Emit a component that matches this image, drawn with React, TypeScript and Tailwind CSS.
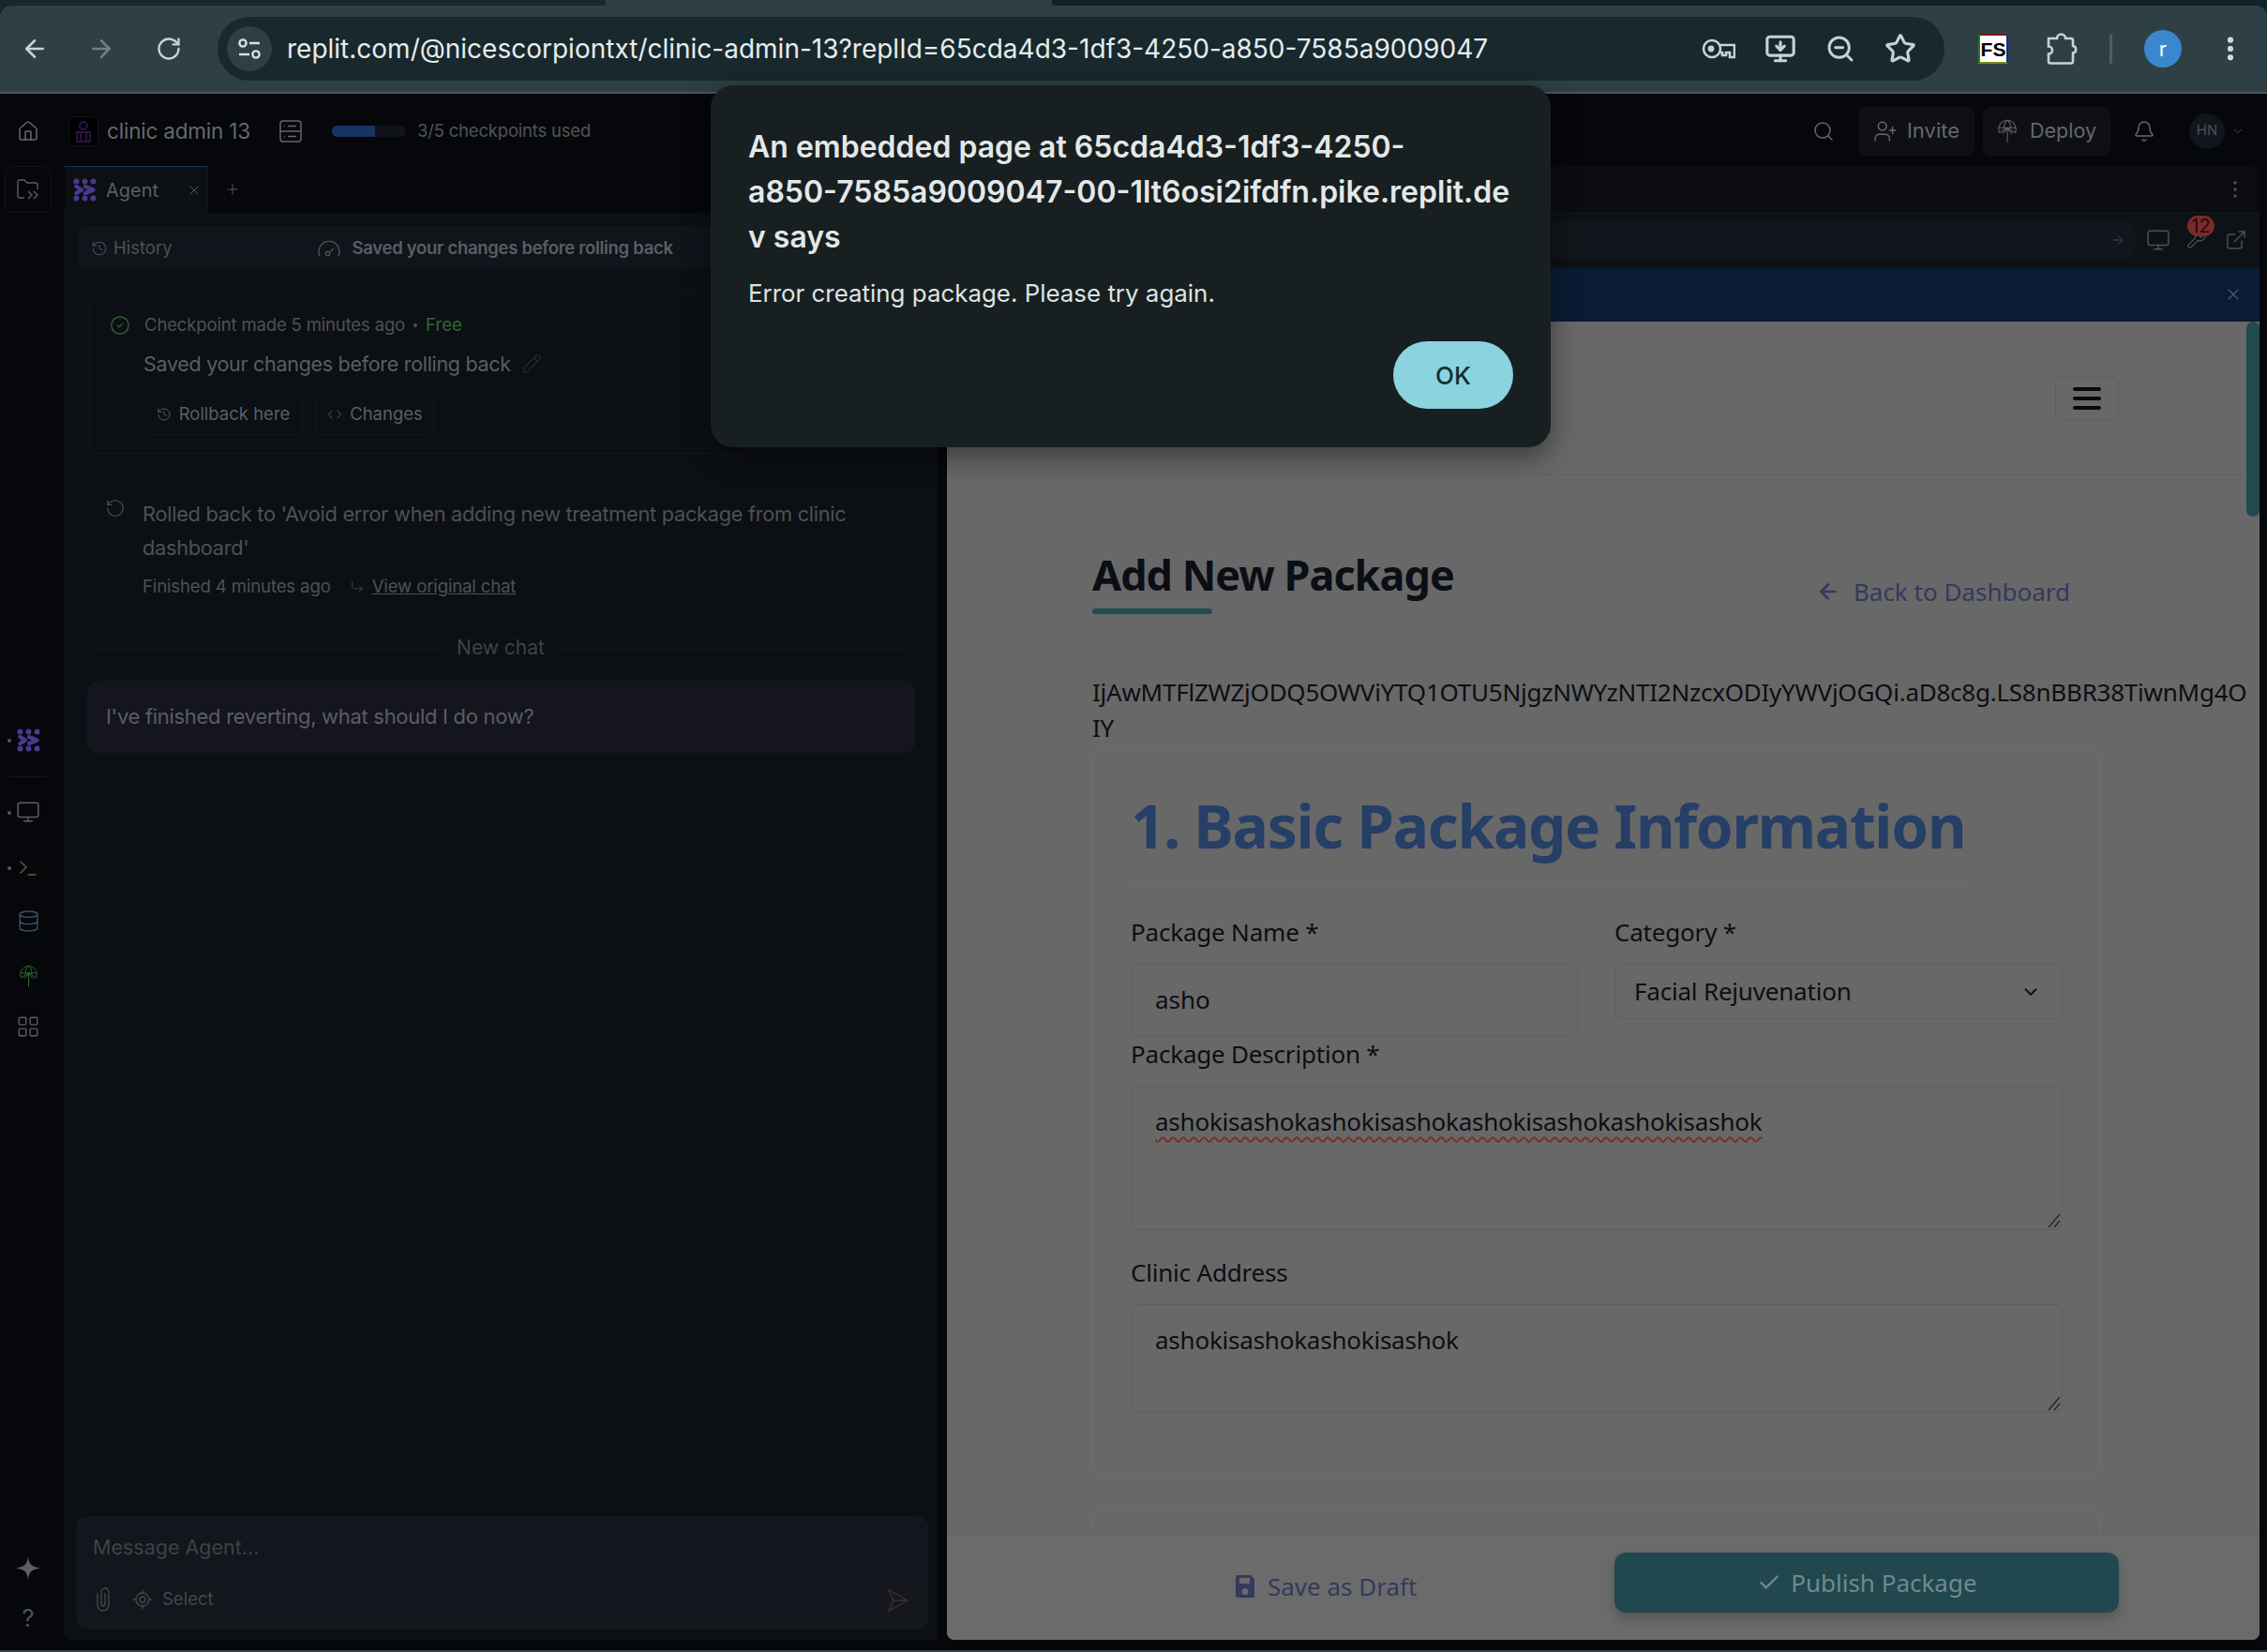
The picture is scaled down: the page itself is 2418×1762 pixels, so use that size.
import React from "react";
import {
  ArrowLeft, ArrowRight, RotateCw, MonitorDown, ZoomOut, Star, EllipsisVertical,
  Home, Search, UserPlus, Bell, ChevronDown, X, Plus, History, CircleCheck,
  Pencil, Code, RotateCcw, CornerDownRight, Monitor, Database, LayoutGrid, LocateFixed,
  ExternalLink, Wrench, Check, Terminal,
} from "lucide-react";

const ui = "font-['Inter','Roboto',sans-serif]";
const page = "font-['Noto_Sans','Open_Sans',sans-serif]";

function AgentLogo({ size = 25 }: { size?: number }) {
  const c = "#4a3a8e";
  return (
    <svg width={size} height={size} viewBox="0 0 25 25" fill={c}>
      <circle cx="3.5" cy="3.5" r="3" /><circle cx="12.5" cy="3.5" r="3" /><circle cx="21.5" cy="3.5" r="3" />
      <circle cx="3.5" cy="21.5" r="3" /><circle cx="12.5" cy="21.5" r="3" /><circle cx="21.5" cy="21.5" r="3" />
      <g fill="none" stroke={c} strokeWidth="4.4" strokeLinecap="round" strokeLinejoin="round">
        <path d="M3.5 9L9 12.5L3.5 16" /><path d="M13 9L21.5 12.5L13 16" />
      </g>
    </svg>
  );
}

function GlobeUp({ size = 24, color = "#5b5e62" }: { size?: number; color?: string }) {
  return (
    <svg width={size} height={size * 28 / 24} viewBox="0 0 24 28" fill="none" stroke={color} strokeWidth="1.1">
      <path d="M3 16a10 10 0 1 1 18 0" /><path d="M2 10h20M3 16l9 -6 9 6" />
      <path d="M12 1c-3 3-4 6-4 10M12 1c3 3 4 6 4 10" /><path d="M12 27V11M6.5 17L12 11l5.500 6" />
    </svg>
  );
}

function KeyIcon() {
  return (
    <svg width="36" height="24" viewBox="0 0 36 24" fill="none" stroke="#c6d3d6" strokeWidth="2.6" className="text-[#c6d3d6]">
      <circle cx="11" cy="12" r="9" /><circle cx="10" cy="12" r="3.4" fill="#c6d3d6" stroke="none" />
      <path d="M20 8h15v13h-5v-5h-4v3h-4v-3h-2" />
    </svg>
  );
}

function PuzzleIcon() {
  return (
    <svg width="34" height="36" viewBox="0 0 34 36" fill="none" stroke="#c6d3d6" strokeWidth="2.6">
      <path d="M3 7h9a4.500 4.500 0 0 1 9 0h6a2 2 0 0 1 2 2v6a3.800 3.800 0 0 1 0 7.500v9a2 2 0 0 1-2 2H5a2 2 0 0 1-2-2v-8a4 4 0 0 0 0-8z" />
    </svg>
  );
}

function ServerIcon() {
  return (
    <svg width="24" height="24" viewBox="0 0 24 24" fill="none" stroke="#65686c" strokeWidth="1.5">
      <rect x="1" y="1" width="22" height="22" rx="3" /><path d="M1 12h22M9 6.500h9M9 17.500h9" />
      <path d="M5 6.500h1M5 17.500h1" />
    </svg>
  );
}

function FolderIcon() {
  return (
    <svg width="24" height="22" viewBox="0 0 24 22" fill="none" stroke="#5b5e62" strokeWidth="1.4">
      <path d="M8 20H3a2 2 0 0 1-2-2V3a2 2 0 0 1 2-2h5l3 3h9a2 2 0 0 1 2 2v5" />
      <path d="M12 13l4 4-4 4M18 13l4 4-4 4" />
    </svg>
  );
}

function GaugeIcon() {
  return (
    <svg width="24" height="22" viewBox="0 0 24 22" fill="none" stroke="#4e5155" strokeWidth="1.4">
      <path d="M2 19a11 11 0 1 1 20 0" /><circle cx="10.500" cy="16.500" r="2.200" /><path d="M12.500 15l4.500-4" />
    </svg>
  );
}

function Clip() {
  return (
    <svg width="22" height="26" viewBox="0 0 22 26" fill="none" stroke="#45484c" strokeWidth="1.3">
      <path d="M5 6v13a6 6 0 0 0 12 0V5a4 4 0 0 0-8 0v13a2 2 0 0 0 4 0V6" />
    </svg>
  );
}

function Plane() {
  return (
    <svg width="24" height="26" viewBox="0 0 24 26" fill="none" stroke="#33363a" strokeWidth="1.3">
      <path d="M2 2l20 11L2 24l5-11zM7 13h15" />
    </svg>
  );
}

function Spark() {
  return (
    <svg width="26" height="25" viewBox="0 0 26 25" fill="#5b5e62">
      <path d="M13 0C14 8 16 11 26 12.500C16 14 14 17 13 25C12 17 10 14 0 12.500C10 11 12 8 13 0Z" />
    </svg>
  );
}

function Floppy() {
  return (
    <svg width="22" height="26" viewBox="0 0 22 26" fill="#333a5c">
      <path fillRule="evenodd" d="M3 1h14l4 4v18a2 2 0 0 1-2 2H3a2 2 0 0 1-2-2V3a2 2 0 0 1 2-2zm2 3v6h11V4zm6 11a3.500 3.500 0 1 0 0 7 3.500 3.500 0 0 0 0-7z" />
    </svg>
  );
}

function Chrome() {
  return (
    <div className="h-[100px] shrink-0 flex flex-col bg-[#15262b]">
      <div className="h-[6px] flex">
        <div className="w-[646px] bg-[#16282d]" />
        <div className="w-[476px] bg-[#2e4045]" />
        <div className="flex-1 bg-[#122327]" />
      </div>
      <div className={`flex-1 bg-[#2e4045] rounded-t-[12px] border-b-2 border-[#4a5759] flex items-center ${ui}`}>
        <div className="w-[72px] flex justify-center"><ArrowLeft size={30} className="text-[#c6d3d6] ml-[2px]" strokeWidth={2} /></div>
        <div className="w-[72px] flex justify-center"><ArrowRight size={30} className="text-[#6f8084]" strokeWidth={2} /></div>
        <div className="w-[72px] flex justify-center"><RotateCw size={28} className="text-[#c6d3d6]" strokeWidth={2} /></div>
        <div className="ml-[16px] w-[1842px] h-[68px] rounded-full bg-[#18282d] flex items-center pl-[10px] pr-[30px]">
          <div className="w-[48px] h-[48px] rounded-full bg-[#2e4045] flex items-center justify-center">
            <svg width="26" height="24" viewBox="0 0 26 24" fill="none" stroke="#d5e0e2" strokeWidth="2.4">
              <circle cx="6" cy="6" r="3.6" /><path d="M13 6h11M2 18h11" /><circle cx="20" cy="18" r="3.600" />
            </svg>
          </div>
          <div className="ml-[16px] flex-1 text-[28px] text-[#e6eced] whitespace-nowrap">replit.com/@nicescorpiontxt/clinic-admin-13?replId=65cda4d3-1df3-4250-a850-7585a9009047</div>
          <div className="flex items-center gap-[31px] text-[#c6d3d6]">
            <KeyIcon />
            <MonitorDown size={34} strokeWidth={2.2} />
            <ZoomOut size={32} strokeWidth={2.2} />
            <Star size={34} strokeWidth={2.2} />
          </div>
        </div>
        <div className="ml-[36px] w-[32px] h-[32px] bg-white border-2 border-t-[#7a1a1a] border-r-[#1a2a8a] border-b-[#7a8a18] border-l-[#2a7a2a] flex items-center justify-center">
          <span className="text-[21px] leading-none font-bold text-black font-['Liberation_Sans',sans-serif]">FS</span>
        </div>
        <div className="ml-[40px] h-[36px]"><PuzzleIcon /></div>
        <div className="ml-[34px] w-[3px] h-[32px] bg-[#4e6064] rounded" />
        <div className="ml-[34px] w-[40px] h-[40px] rounded-full bg-[#3b87cf] text-white text-[22px] flex items-center justify-center">r</div>
        <EllipsisVertical size={32} strokeWidth={2.6} className="ml-[36px] text-[#d5e0e2]" />
      </div>
    </div>
  );
}

function TopBar() {
  return (
    <div className={`h-[77px] shrink-0 flex items-center pt-[2px] pl-[18px] pr-[24px] text-[#65686c] ${ui}`}>
      <Home size={24} strokeWidth={1.5} />
      <div className="ml-[31px] w-[32px] h-[32px] rounded-[6px] bg-[#000000] border border-[#101216] flex items-center justify-center">
        <svg width="16" height="24" viewBox="0 0 16 24" fill="none" stroke="#3a1a5e" strokeWidth="1.4">
          <circle cx="8" cy="6" r="4" /><path d="M1 13h14v10H1zM5 13v10M11 13v10" />
        </svg>
      </div>
      <span className="ml-[9px] w-[152px] text-[22.5px] tracking-[-0.2px] whitespace-nowrap">clinic admin 13</span>
      <div className="ml-[32px] h-[24px]"><ServerIcon /></div>
      <div className="ml-[32px] w-[79px] h-[12px] rounded-full bg-[#10141a] overflow-hidden">
        <div className="w-[46px] h-full bg-[#173362]" />
      </div>
      <span className="ml-[12px] text-[18.5px] text-[#515458] tracking-[-0.2px]">3/5 checkpoints used</span>
      <div className="flex-1" />
      <Search size={24} strokeWidth={1.5} className="mr-[25px]" />
      <div className="w-[124px] h-[52px] rounded-[8px] bg-[#0e1014] flex items-center justify-center gap-[10px] text-[22px]">
        <UserPlus size={26} strokeWidth={1.4} /><span>Invite</span>
      </div>
      <div className="ml-[9px] w-[136px] h-[52px] rounded-[8px] bg-[#0e1014] flex items-center justify-center gap-[13px] text-[21.5px]">
        <GlobeUp size={22} color="#65686c" /><span>Deploy</span>
      </div>
      <Bell size={24} strokeWidth={1.5} className="ml-[24px]" />
      <div className="ml-[36px] w-[38px] h-[38px] rounded-full bg-[#11151c] flex items-center justify-center text-[15px] text-[#4e5155]">HN</div>
      <ChevronDown size={14} strokeWidth={1.5} className="ml-[7px] text-[#4e5155]" />
    </div>
  );
}

function SideDot() {
  return <span className="absolute left-[8px] top-1/2 -mt-[2px] w-[4px] h-[4px] rounded-full bg-[#55585c]" />;
}

function Sidebar() {
  return (
    <div className="w-[68px] shrink-0 flex flex-col items-center pr-[8px] text-[#5b5e62]">
      <div className="w-[50px] h-[50px] rounded-[8px] border border-[#11141a] flex items-center justify-center">
        <FolderIcon />
      </div>
      <div className="relative mt-[550px] w-full h-[25px] flex justify-center"><SideDot /><AgentLogo /></div>
      <div className="mt-[26px] w-[40px] h-px bg-[#14171d]" />
      <div className="relative mt-[24px] w-full h-[28px] flex justify-center"><SideDot /><Monitor size={26} strokeWidth={1.4} /></div>
      <div className="relative mt-[31px] w-full h-[28px] flex justify-center items-center"><SideDot /><Terminal size={24} strokeWidth={1.4} className="text-[#6b5d2c]" /></div>
      <div className="mt-[30px] h-[26px] flex justify-center"><Database size={25} strokeWidth={1.4} className="text-[#3c4f5f]" /></div>
      <div className="mt-[33px] h-[26px] flex justify-center"><GlobeUp size={21} color="#2f6b32" /></div>
      <div className="mt-[27px] h-[24px] flex justify-center"><LayoutGrid size={26} strokeWidth={1.3} /></div>
      <div className="flex-1" />
      <Spark />
      <div className={`mt-[27px] mb-[20px] text-[26px] leading-[28px] text-[#4e5155] ${ui}`}>?</div>
    </div>
  );
}

function SmallBtn({ icon, label, w }: { icon: React.ReactNode; label: string; w: string }) {
  return (
    <div className={`${w} h-[44px] rounded-[5px] border border-[#14171d] flex items-center justify-center gap-[8px] text-[18.5px] text-[#5b5e62]`}>
      {icon}<span>{label}</span>
    </div>
  );
}

function LeftPanel() {
  return (
    <div className={`w-[932px] shrink-0 flex flex-col mb-[11px] ${ui}`}>
      <div className="h-[50px] flex items-center text-[#5b5e62]">
        <div className="ml-[1px] w-[153px] h-[50px] bg-[#0c0f14] border-t border-[#173362] border-r border-r-[#13161c] flex items-center pl-[9px]">
          <AgentLogo />
          <span className="ml-[10px] text-[20px]">Agent</span>
          <X size={16} strokeWidth={1.4} className="ml-[30px]" />
        </div>
        <Plus size={18} strokeWidth={1.2} className="ml-[17px]" />
      </div>
      <div className="flex-1 bg-[#0c0f14] rounded-b-[6px] flex flex-col relative">
        <div className="mt-[14px] ml-[15px] mr-[10px] h-[46px] pt-[1px] rounded-[8px] bg-[#10141b] flex items-center pl-[14px] text-[#4e5155]">
          <History size={18} strokeWidth={1.4} />
          <span className="ml-[6px] text-[18.5px]">History</span>
          <div className="ml-[155px] h-[22px]"><GaugeIcon /></div>
          <span className="ml-[13px] text-[18.5px] font-semibold text-[#5b5e62] tracking-[-0.3px]">Saved your changes before rolling back</span>
        </div>
        <div className="mt-[26px] ml-[27px] mr-[25px] h-[171px] rounded-[8px] border border-[#14171d] flex flex-col pl-[21px] pt-[22px]">
          <div className="flex items-center h-[22px]">
            <CircleCheck size={22} strokeWidth={1.3} className="text-[#2f6b32]" />
            <span className="ml-[15px] text-[18.6px] text-[#4e5155] tracking-[-0.2px]">Checkpoint made 5 minutes ago</span>
            <span className="ml-[9px] w-[4px] h-[4px] rounded-full bg-[#4e5155]" />
            <span className="ml-[9px] text-[18.6px] text-[#2f6b32]">Free</span>
          </div>
          <div className="mt-[16px] ml-[36px] flex items-center h-[28px]">
            <span className="text-[21.5px] text-[#5b5e62] tracking-[-0.3px]">Saved your changes before rolling back</span>
            <Pencil size={22} strokeWidth={1.1} className="ml-[11px] text-[#2c2f33]" />
          </div>
          <div className="mt-[18px] ml-[36px] flex gap-[14px]">
            <SmallBtn w="w-[170px]" icon={<History size={16} strokeWidth={1.4} />} label="Rollback here" />
            <SmallBtn w="w-[126px]" icon={<Code size={16} strokeWidth={1.4} />} label="Changes" />
          </div>
        </div>
        <div className="mt-[46px] ml-[44px] mr-[60px] flex">
          <RotateCcw size={22} strokeWidth={1.3} className="text-[#4e5155] mt-[1px] shrink-0" />
          <div className="ml-[18px] flex flex-col">
            <div className="w-[760px] text-[21.8px] leading-[36px] text-[#4e5155] tracking-[-0.3px]">Rolled back to 'Avoid error when adding new treatment package from clinic dashboard'</div>
            <div className="mt-[11px] flex items-center text-[18.7px] text-[#4e5155] tracking-[-0.2px] h-[26px]">
              <span>Finished 4 minutes ago</span>
              <CornerDownRight size={16} strokeWidth={1.2} className="ml-[20px]" />
              <span className="ml-[8px] underline">View original chat</span>
            </div>
          </div>
        </div>
        <div className="mt-[37px] mx-[35px] flex items-center gap-[13px] h-[30px]">
          <div className="flex-1 border-t border-dotted border-[#1b1e24]" />
          <span className="text-[21px] text-[#3f4246]">New chat</span>
          <div className="flex-1 border-t border-dotted border-[#1b1e24]" />
        </div>
        <div className="mt-[20px] ml-[25px] mr-[24px] h-[77px] rounded-[12px] bg-[#14151f] flex items-center pl-[20px] text-[22px] text-[#5b5e62] tracking-[-0.3px]">
          I've finished reverting, what should I do now?
        </div>
        <div className="flex-1" />
        <div className="mb-[12px] ml-[14px] mr-[10px] h-[119px] rounded-[10px] bg-[#12161d] border border-[#161a22] relative flex flex-col px-[16px]">
          <div className="mt-[17px] h-[28px] text-[21.5px] leading-[28px] text-[#3f4246]">Message Agent...</div>
          <div className="mt-[28px] flex items-center text-[#45484c]">
            <Clip />
            <LocateFixed size={24} strokeWidth={1.3} className="ml-[19px]" />
            <span className="ml-[9px] text-[18.5px]">Select</span>
          </div>
          <div className="absolute right-[12px] bottom-[10px] w-[38px] h-[38px] rounded-[6px] bg-[#15171b] flex items-center justify-center">
            <Plane />
          </div>
        </div>
      </div>
    </div>
  );
}

function Label({ children }: { children: React.ReactNode }) {
  return <div className="h-[34px] leading-[34px] text-[26px] text-[#0c0e12] tracking-[-0.2px]">{children}</div>;
}

function Grip() {
  return (
    <svg className="absolute right-[1px] bottom-[1px]" width="14" height="16" viewBox="0 0 14 16" stroke="#222" strokeWidth="1.2">
      <path d="M1 15L13 1M7 15L13 8" />
    </svg>
  );
}

function RightPanel() {
  return (
    <div className="w-[1400px] ml-[10px] shrink-0 flex flex-col mb-[11px] rounded-b-[8px] overflow-hidden">
      <div className="h-[50px] bg-[#0a0c10] border-b border-[#14171d] flex items-center justify-end pr-[14px] text-[#4e5155] rounded-t-[6px]">
        <EllipsisVertical size={24} strokeWidth={1.6} />
      </div>
      <div className="h-[58px] bg-[#0e1115] flex items-center pl-[20px] pr-[13px] text-[#4e5155] relative">
        <div className="flex-1 h-[38px] rounded-[6px] bg-[#12151b] flex items-center justify-end pr-[10px]">
          <ArrowRight size={16} strokeWidth={1.2} />
        </div>
        <Monitor size={26} strokeWidth={1.4} className="ml-[12px]" />
        <div className="ml-[17px] relative w-[24px] h-[24px]">
          <Wrench size={22} strokeWidth={1.4} />
          <span className={`absolute -top-[14px] left-[1px] w-[29px] h-[22px] rounded-full bg-[#7a2a2a] text-[#2a0808] text-[20px] leading-[22px] text-center ${ui}`}>12</span>
        </div>
        <ExternalLink size={24} strokeWidth={1.4} className="ml-[17px]" />
      </div>
      <div className="h-[58px] bg-[#0a1b33] flex items-center justify-end pr-[18px] text-[#4d5a6c]">
        <X size={20} strokeWidth={1.4} />
      </div>
      <div className="flex-1 bg-[#686868] relative flex flex-col overflow-hidden">
        <div className="absolute right-0 top-0 w-[14px] h-[208px] rounded-full bg-[#1e4a50] z-10" />
        <div className="h-[164px] shrink-0 border-b border-[#606060] flex items-center justify-end pr-[150px]">
          <div className="w-[68px] h-[46px] rounded-[6px] border border-[#5e5e5e] flex flex-col items-center justify-center gap-[6px]">
            <div className="w-[30px] h-[4px] rounded bg-[#0a0a0a]" />
            <div className="w-[30px] h-[4px] rounded bg-[#0a0a0a]" />
            <div className="w-[30px] h-[4px] rounded bg-[#0a0a0a]" />
          </div>
        </div>
        <div className={`flex-1 overflow-hidden pl-[155px] ${page}`}>
          <div className="w-[1075px] pr-[32px] flex justify-between">
            <div className="mt-[78px]">
              <div className="h-[56px] leading-[56px] text-[45px] font-bold text-[#0b0e14] tracking-[-1px] whitespace-nowrap">Add New Package</div>
              <div className="mt-[8px] w-[128px] h-[6px] rounded bg-[#1f4f55]" />
            </div>
            <div className="self-end mb-[4px] h-[40px] flex items-center gap-[14px] text-[26px] text-[#333a5c]">
              <ArrowLeft size={26} strokeWidth={2.4} /><span>Back to Dashboard</span>
            </div>
          </div>
          <div className="mt-[64px] h-[76px] text-[26px] leading-[38px] text-[#0c0e12] tracking-[-0.24px] whitespace-nowrap">
            <div>IjAwMTFlZWZjODQ5OWViYTQ1OTU5NjgzNWYzNTI2NzcxODIyYWVjOGQi.aD8c8g.LS8nBBR38TiwnMg4O</div>
            <div>IY</div>
          </div>
          <div className="w-[1075px] h-[778px] rounded-[12px] border border-[#6e6e6e] px-[40px] pt-[49px]">
            <div className="h-[72px] leading-[72px] text-[64px] font-bold text-[#263f66] tracking-[-1.3px] whitespace-nowrap">1. Basic Package Information</div>
            <div className="mt-[26px] w-[890px] border-t border-[#6d6d6d]" />
            <div className="mt-[33px] grid grid-cols-[477px_478px] gap-x-[39px]">
              <div>
                <Label>Package Name *</Label>
                <div className="mt-[17px] h-[77px] rounded-[8px] border border-[#5f5f5f] pl-[25px] flex items-center text-[26px] text-[#0c0e12]">asho</div>
              </div>
              <div>
                <Label>Category *</Label>
                <div className="mt-[17px] h-[59px] rounded-[8px] border border-[#5f5f5f] pl-[20px] pr-[22px] flex items-center justify-between text-[26px] text-[#0c0e12]">
                  <span className="tracking-[-0.2px]">Facial Rejuvenation</span><ChevronDown size={22} strokeWidth={2} />
                </div>
              </div>
            </div>
            <div className="mt-[2px]"><Label>Package Description *</Label></div>
            <div className="relative mt-[17px] w-[994px] h-[154px] rounded-[8px] border border-[#5f5f5f] pl-[25px] pt-[18px] text-[26px] leading-[38px] text-[#0c0e12]">
              <span className="underline decoration-wavy decoration-[#7a2a2a] decoration-[1.5px] underline-offset-[6px] tracking-[-0.23px]">ashokisashokashokisashokashokisashokashokisashok</span>
              <Grip />
            </div>
            <div className="mt-[28px]"><Label>Clinic Address</Label></div>
            <div className="relative mt-[17px] w-[994px] h-[116px] rounded-[8px] border border-[#5f5f5f] pl-[25px] pt-[18px] text-[26px] leading-[38px] text-[#0c0e12]">
              <span className="tracking-[-0.23px]">ashokisashokashokisashok</span>
              <Grip />
            </div>
          </div>
          <div className="mt-[34px] w-[1075px] h-[200px] rounded-[12px] border border-[#6e6e6e]" />
        </div>
        <div className={`h-[112px] shrink-0 bg-[#6b6b6b] border-t border-[#636363] flex items-start ${page}`}>
          <div className="ml-[307px] mt-[35px] h-[38px] flex items-center text-[26px] text-[#333a5c]">
            <Floppy /><span className="ml-[13px]">Save as Draft</span>
          </div>
          <div className="ml-[211px] mt-[18px] w-[538px] h-[64px] rounded-[12px] bg-[#20484e] shadow-[0_6px_12px_rgba(0,0,0,0.2)] flex items-center justify-center gap-[10px] text-[26px] text-[#6f8a8c]">
            <Check size={26} strokeWidth={2.2} /><span>Publish Package</span>
          </div>
        </div>
      </div>
    </div>
  );
}

function AlertDialog() {
  return (
    <div className={`absolute left-[758px] top-[91px] w-[896px] h-[386px] rounded-[24px] bg-[#181f20] shadow-[0_10px_30px_rgba(0,0,0,0.45)] pl-[40px] pt-[42px] ${ui}`}>
      <div className="text-[32px] leading-[48px] font-semibold text-[#e3e8e9]">
        <div className="whitespace-nowrap">An embedded page at 65cda4d3-1df3-4250-</div>
        <div className="whitespace-nowrap">a850-7585a9009047-00-1lt6osi2ifdfn.pike.replit.de</div>
        <div className="whitespace-nowrap">v says</div>
      </div>
      <div className="mt-[18px] text-[25.9px] leading-[36px] text-[#dde3e4]">Error creating package. Please try again.</div>
      <div className="absolute right-[40px] bottom-[41px] w-[128px] h-[72px] rounded-full bg-[#8cd3e0] flex items-center justify-center text-[26px] font-medium text-[#0e3035]">OK</div>
    </div>
  );
}

export default function App() {
  return (
    <div className="relative w-[2418px] h-[1762px] overflow-hidden bg-[#05070b] flex flex-col">
      <Chrome />
      <TopBar />
      <div className="flex-1 flex min-h-0">
        <Sidebar />
        <LeftPanel />
        <RightPanel />
      </div>
      <div className="h-[2px] shrink-0 bg-[#3b3f42]" />
      <AlertDialog />
    </div>
  );
}
